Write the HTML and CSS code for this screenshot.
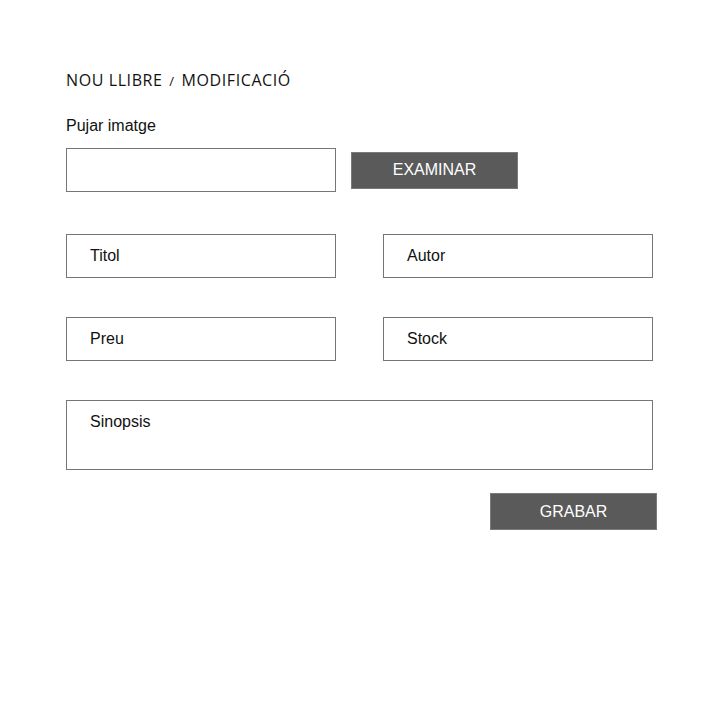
FILE: index.html
```html
<!DOCTYPE html>
<html>
<head>
<meta charset="utf-8">
<link rel="stylesheet" href="styles.css">
</head>
<body>
<div class="page">
  <h1 class="title">NOU LLIBRE <span class="slash">/</span> MODIFICACIÓ</h1>
  <div class="label">Pujar imatge</div>
  <div class="upload-row">
    <div class="box upload"></div>
    <div class="btn">EXAMINAR</div>
  </div>
  <div class="row">
    <div class="box field">Titol</div>
    <div class="box field">Autor</div>
  </div>
  <div class="row">
    <div class="box field">Preu</div>
    <div class="box field">Stock</div>
  </div>
  <div class="box area">Sinopsis</div>
  <div class="actions">
    <div class="btn">GRABAR</div>
  </div>
</div>
</body>
</html>
```
FILE: styles.css
```css
html, body {
  margin: 0;
  padding: 0;
  background: #fff;
}
.page {
  padding: 70px 0 0 66px;
  width: 587px;
  font-family: "Liberation Sans", Arial, sans-serif;
  color: #111;
}
.title {
  margin: 0;
  font-family: "Open Sans", sans-serif;
  font-weight: 400;
  font-size: 16px;
  line-height: 20px;
  letter-spacing: 0.6px;
  color: #111;
}
.slash {
  font-size: 13px;
  margin: 0 2px;
}
.label {
  margin-top: 26px;
  font-size: 16px;
  line-height: 18px;
}
.upload-row {
  margin-top: 13px;
  display: flex;
  align-items: center;
  gap: 15px;
}
.box {
  box-sizing: border-box;
  border: 1px solid #767676;
  background: #fff;
}
.upload {
  width: 270px;
  height: 44px;
}
.btn {
  box-sizing: border-box;
  width: 167px;
  height: 37px;
  background: #5a5a5a;
  border: 1px solid #7a7a7a;
  color: #fff;
  font-family: "Liberation Sans", Arial, sans-serif;
  font-size: 16px;
  display: flex;
  align-items: center;
  justify-content: center;
}
.row {
  display: flex;
  gap: 47px;
  margin-top: 39px;
}
.upload-row + .row {
  margin-top: 42px;
}
.field {
  width: 270px;
  height: 44px;
  padding-left: 23px;
  font-size: 16px;
  display: flex;
  align-items: center;
}
.area {
  margin-top: 39px;
  width: 587px;
  height: 70px;
  padding: 12px 23px;
  font-size: 16px;
  line-height: 18px;
}
.actions {
  display: flex;
  justify-content: flex-end;
  margin-top: 23px;
  width: 591px;
}
```
